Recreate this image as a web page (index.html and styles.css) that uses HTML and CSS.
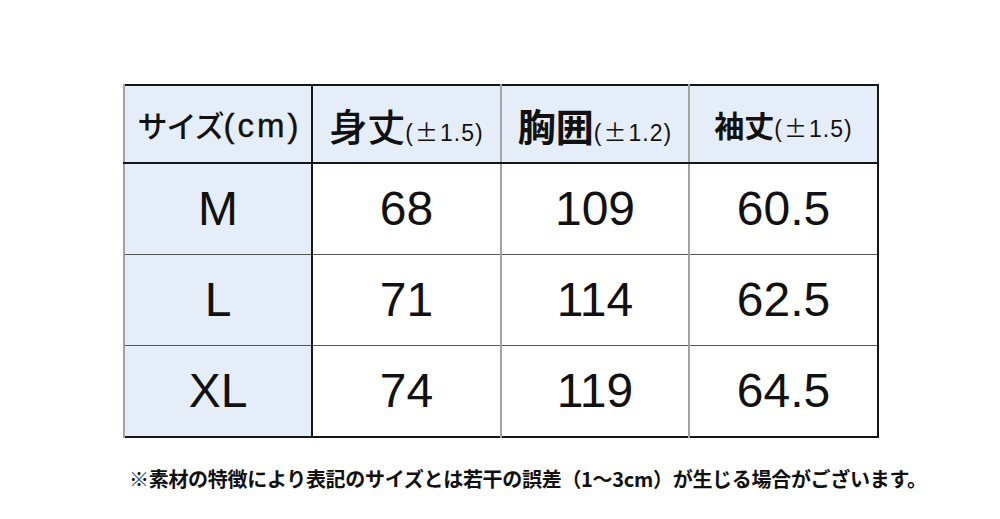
FILE: index.html
```html
<!DOCTYPE html>
<html lang="ja">
<head>
<meta charset="utf-8">
<link rel="stylesheet" href="styles.css">
</head>
<body>
<div class="page">
  <table class="size-table">
    <colgroup>
      <col class="c1"><col class="c2"><col class="c3"><col class="c4">
    </colgroup>
    <thead>
      <tr class="head">
        <th class="label"><span class="h-size">サイズ</span><span class="h-unit">(cm)</span></th>
        <th><span class="h-big">身丈</span><span class="tol">(<span class="pm">±</span>1.5)</span></th>
        <th><span class="h-big h-bold">胸囲</span><span class="tol">(<span class="pm">±</span>1.2)</span></th>
        <th><span class="h-mid">袖丈</span><span class="tol">(<span class="pm">±</span>1.5)</span></th>
      </tr>
    </thead>
    <tbody>
      <tr><th class="label">M</th><td>68</td><td>109</td><td>60.5</td></tr>
      <tr><th class="label">L</th><td>71</td><td>114</td><td>62.5</td></tr>
      <tr><th class="label">XL</th><td>74</td><td>119</td><td>64.5</td></tr>
    </tbody>
  </table>
  <p class="note">※素材の特徴により表記のサイズとは若干の誤差（1〜3cm）が生じる場合がございます。</p>
</div>
</body>
</html>
```
FILE: styles.css
```css
html, body {
  margin: 0;
  padding: 0;
  background: #ffffff;
}
.page {
  width: 1000px;
  height: 519px;
  padding: 84px 0 0 123px;
  box-sizing: border-box;
  color: #111111;
  font-family: "Liberation Sans", "Noto Sans CJK JP", sans-serif;
}
.size-table {
  border-collapse: collapse;
  table-layout: fixed;
  width: 754px;
  border: 2px solid #161616;
}
.c1 { width: 188px; }
.c2 { width: 189px; }
.c3 { width: 188px; }
.c4 { width: 189px; }
.size-table th,
.size-table td {
  padding: 0;
  text-align: center;
  vertical-align: middle;
  font-weight: normal;
  border-left: 2px solid #a3a3a3;
  border-top: 1px solid #555555;
}
.size-table .label {
  background: #e5edf8;
  border-right: 2px solid #161616;
}
.head th {
  height: 76px;
  background: #e5edf8;
  border-bottom: 2px solid #161616;
  white-space: nowrap;
  font-family: "Noto Sans CJK JP", sans-serif;
}
tbody th, tbody td {
  height: 90px;
  font-size: 48px;
  line-height: 1;
  padding-top: 6px;
}
tbody tr:first-child th,
tbody tr:first-child td {
  border-top: 2px solid #161616;
}
.h-size {
  font-size: 30px;
  font-weight: 500;
  letter-spacing: -1px;
}
.h-unit {
  font-family: "Liberation Sans", sans-serif;
  font-size: 33px;
  letter-spacing: 3px;
  margin-right: -3px;
  -webkit-text-stroke: 0.4px #111111;
}
.h-big {
  font-size: 38px;
  font-weight: 500;
}
.h-bold {
  font-weight: 700;
}
.h-mid {
  font-size: 30px;
  font-weight: 700;
}
.tol {
  font-size: 23px;
  font-family: "Liberation Sans", "Noto Sans CJK JP", sans-serif;
  letter-spacing: 1px;
}
.pm {
  font-family: "Noto Sans CJK JP", sans-serif;
  margin: 0 1px;
}
.note {
  margin: 27px 0 0 6px;
  font-family: "Noto Sans CJK JP", sans-serif;
  font-size: 20px;
  font-weight: 700;
  line-height: 28px;
  letter-spacing: -0.3px;
  white-space: nowrap;
}
```
